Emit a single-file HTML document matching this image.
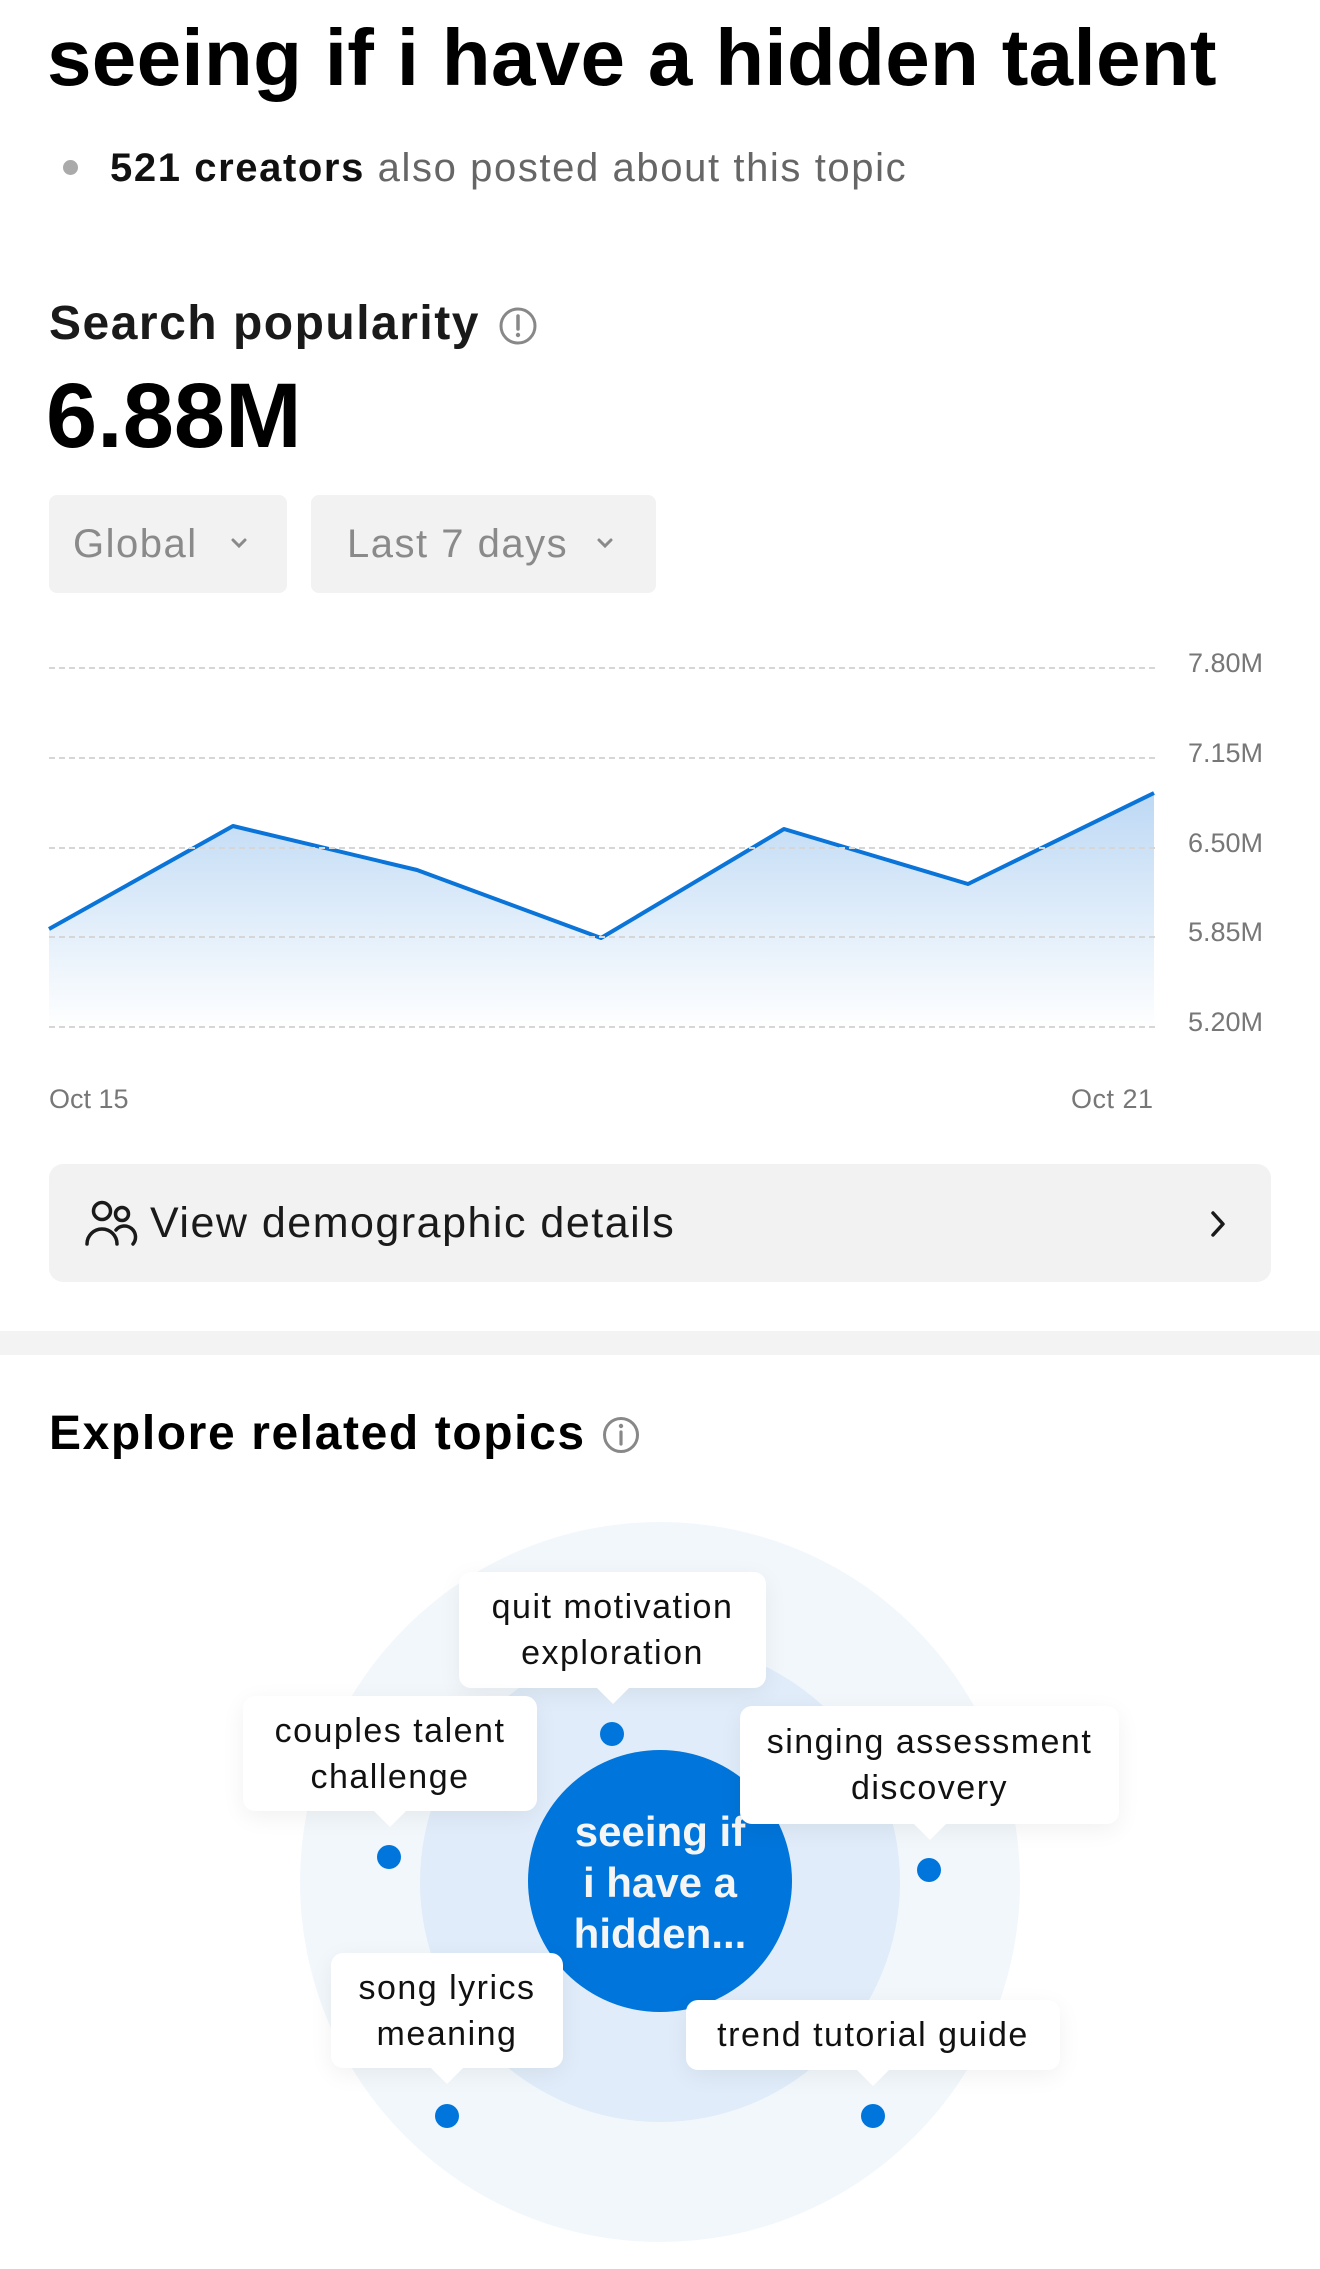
<!DOCTYPE html>
<html><head><meta charset="utf-8"><style>
*{margin:0;padding:0;box-sizing:border-box}
body{width:1320px;height:2269px;background:#fff;font-family:"Liberation Sans",Arial,sans-serif;position:relative;overflow:hidden;color:#000}
.a{position:absolute;white-space:nowrap}
.dd{position:absolute;top:495px;height:98px;background:#f2f2f2;border-radius:8px;color:#8a8a8a;font-size:40px;line-height:98px;letter-spacing:1.5px}
.grid{position:absolute;left:49px;width:1106px;border-top:2px dashed #d6d6d6;height:0}
.yl{position:absolute;left:1188px;font-size:27px;color:#777}
.bub{position:absolute;background:#fff;border-radius:12px;box-shadow:0 6px 24px rgba(0,0,0,0.06);font-size:34px;line-height:46px;text-align:center;color:#111;display:flex;align-items:center;justify-content:center;letter-spacing:1.5px;white-space:nowrap}
.bub:after{content:"";position:absolute;left:50%;bottom:-16px;margin-left:-16px;border-left:16px solid transparent;border-right:16px solid transparent;border-top:16px solid #fff}
.dot{position:absolute;width:24px;height:24px;border-radius:50%;background:#0075db}
</style></head><body>
<div class="a" style="left:47px;top:12px;font-size:80px;font-weight:bold;letter-spacing:0.3px">seeing if i have a hidden talent</div>
<div class="a" style="left:63px;top:160px;width:15px;height:15px;border-radius:50%;background:#aaa"></div>
<div class="a" style="left:110px;top:146px;font-size:40px;color:#666;letter-spacing:1.6px"><b style="color:#111">521 creators</b> also posted about this topic</div>
<div class="a" style="left:49px;top:296px;font-size:48px;font-weight:bold;color:#1a1a1a;letter-spacing:1.5px">Search popularity</div>
<svg class="a" style="left:498px;top:306px" width="40" height="40" viewBox="0 0 40 40"><circle cx="20" cy="20" r="17" fill="none" stroke="#888" stroke-width="3"/><line x1="20" y1="10" x2="20" y2="23" stroke="#888" stroke-width="3.5" stroke-linecap="round"/><circle cx="20" cy="29" r="2.2" fill="#888"/></svg>
<div class="a" style="left:46px;top:364px;font-size:92px;font-weight:bold">6.88M</div>
<div class="dd" style="left:49px;width:238px;padding-left:24px">Global<svg style="position:absolute;left:180px;top:41px" width="20" height="14" viewBox="0 0 20 14"><path d="M4 4 L10 10 L16 4" fill="none" stroke="#8a8a8a" stroke-width="3" stroke-linecap="round"/></svg></div>
<div class="dd" style="left:311px;width:345px;padding-left:36px">Last 7 days<svg style="position:absolute;left:284px;top:41px" width="20" height="14" viewBox="0 0 20 14"><path d="M4 4 L10 10 L16 4" fill="none" stroke="#8a8a8a" stroke-width="3" stroke-linecap="round"/></svg></div>
<svg class="a" style="left:0;top:0" width="1320" height="1100">
<defs><linearGradient id="g" x1="0" y1="790" x2="0" y2="1030" gradientUnits="userSpaceOnUse"><stop offset="0" stop-color="#bcd8f4"/><stop offset="1" stop-color="#ffffff"/></linearGradient></defs>
<path d="M49 929 L233 826 L417 870 L601 938 L784 829 L968 884 L1154 793 L1154 1026 L49 1026Z" fill="url(#g)"/>
<path d="M49 929 L233 826 L417 870 L601 938 L784 829 L968 884 L1154 793" fill="none" stroke="#0a74d8" stroke-width="4" stroke-linejoin="round"/>
</svg>
<div class="grid" style="top:667px"></div><div class="grid" style="top:757px"></div><div class="grid" style="top:847px"></div><div class="grid" style="top:936px"></div><div class="grid" style="top:1026px"></div>
<div class="yl" style="top:648px">7.80M</div><div class="yl" style="top:738px">7.15M</div><div class="yl" style="top:828px">6.50M</div><div class="yl" style="top:917px">5.85M</div><div class="yl" style="top:1007px">5.20M</div>
<div class="a" style="left:49px;top:1084px;font-size:27px;color:#777">Oct 15</div>
<div class="a" style="left:1071px;top:1084px;font-size:27px;color:#777;letter-spacing:0.5px">Oct 21</div>
<div class="a" style="left:49px;top:1164px;width:1222px;height:118px;background:#f2f2f2;border-radius:14px"></div>
<svg class="a" style="left:84px;top:1200px" width="54" height="46" viewBox="0 0 54 46"><circle cx="18" cy="11" r="8.5" fill="none" stroke="#1a1a1a" stroke-width="3.5"/><circle cx="38" cy="14" r="6.5" fill="none" stroke="#1a1a1a" stroke-width="3.5"/><path d="M3 44 A15 15 0 0 1 33 44" fill="none" stroke="#1a1a1a" stroke-width="3.5" stroke-linecap="round"/><path d="M32 30 A11 11 0 0 1 49 44" fill="none" stroke="#1a1a1a" stroke-width="3.5" stroke-linecap="round"/></svg>
<div class="a" style="left:150px;top:1199px;font-size:43px;color:#1a1a1a;letter-spacing:1.5px">View demographic details</div>
<svg class="a" style="left:1208px;top:1209px" width="20" height="30" viewBox="0 0 20 30"><path d="M5 4 L15 15 L5 26" fill="none" stroke="#1a1a1a" stroke-width="3.5" stroke-linecap="round" stroke-linejoin="round"/></svg>
<div class="a" style="left:0;top:1331px;width:1320px;height:24px;background:#f3f3f3"></div>
<div class="a" style="left:49px;top:1406px;font-size:48px;font-weight:bold;letter-spacing:1.6px">Explore related topics</div>
<svg class="a" style="left:602px;top:1416px" width="38" height="38" viewBox="0 0 38 38"><circle cx="19" cy="19" r="16.5" fill="none" stroke="#888" stroke-width="3"/><line x1="19" y1="16" x2="19" y2="28" stroke="#888" stroke-width="3.2" stroke-linecap="round"/><circle cx="19" cy="10" r="2.2" fill="#888"/></svg>
<div class="a" style="left:300px;top:1522px;width:720px;height:720px;border-radius:50%;background:#f2f7fc"></div>
<div class="a" style="left:420px;top:1642px;width:480px;height:480px;border-radius:50%;background:#e0ecf9"></div>
<div class="a" style="left:528px;top:1750px;width:264px;height:262px;border-radius:50%;background:#0075db"></div>
<div class="a" style="left:560px;top:1806px;width:200px;font-size:42px;font-weight:bold;color:#f5f5f5;line-height:51px;text-align:center">seeing if<br>i have a<br>hidden...</div>
<div class="bub" style="left:459px;top:1572px;width:307px;height:116px">quit motivation<br>exploration</div>
<div class="dot" style="left:600px;top:1722px"></div>
<div class="bub" style="left:243px;top:1696px;width:294px;height:115px">couples talent<br>challenge</div>
<div class="dot" style="left:377px;top:1845px"></div>
<div class="bub" style="left:740px;top:1706px;width:379px;height:118px">singing assessment<br>discovery</div>
<div class="dot" style="left:917px;top:1858px"></div>
<div class="bub" style="left:331px;top:1953px;width:232px;height:115px">song lyrics<br>meaning</div>
<div class="dot" style="left:435px;top:2104px"></div>
<div class="bub" style="left:686px;top:2000px;width:374px;height:70px">trend tutorial guide</div>
<div class="dot" style="left:861px;top:2104px"></div>
</body></html>
